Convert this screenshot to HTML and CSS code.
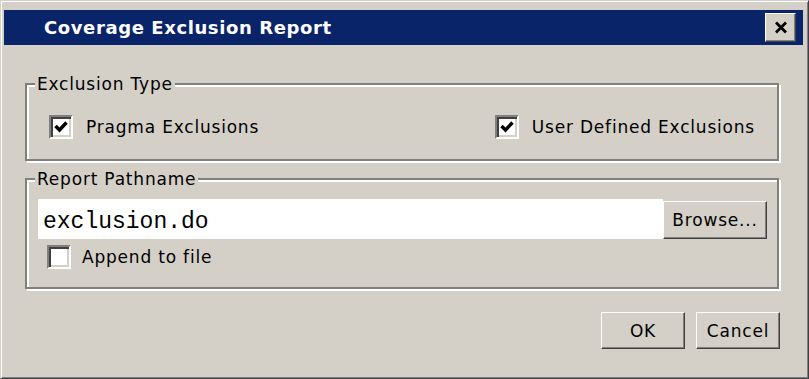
FILE: index.html
```html
<!DOCTYPE html>
<html lang="en">
<head>
  <meta charset="UTF-8" />
  <title>Coverage Exclusion Report</title>
  <link rel="stylesheet" href="styles.css">
</head>
<body>
  <div class="window">
    <div class="titlebar">
      <span class="title">Coverage Exclusion Report</span>
      <button class="close-btn" type="button" aria-label="Close">
        <svg width="14" height="13" viewBox="0 0 14 13">
          <path d="M2 1.5 L12 11.5 M12 1.5 L2 11.5" stroke="#000" stroke-width="2.8" fill="none"/>
        </svg>
      </button>
    </div>

    <form class="dialog">
      <fieldset class="group">
        <legend>Exclusion Type</legend>
        <div class="type-row">
          <label class="check">
            <span class="box">
              <svg width="16" height="16" viewBox="0 0 16 16">
                <path d="M2.5 7 L6.5 11 L13.5 3.5" stroke="#000" stroke-width="3.4" fill="none"/>
              </svg>
            </span>
            Pragma Exclusions
          </label>
          <label class="check">
            <span class="box">
              <svg width="16" height="16" viewBox="0 0 16 16">
                <path d="M2.5 7 L6.5 11 L13.5 3.5" stroke="#000" stroke-width="3.4" fill="none"/>
              </svg>
            </span>
            User Defined Exclusions
          </label>
        </div>
      </fieldset>

      <fieldset class="group path-group">
        <legend>Report Pathname</legend>
        <div class="path-body">
          <div class="path-row">
            <input class="path-input" type="text" value="exclusion.do" />
            <button class="btn browse-btn" type="button">Browse...</button>
          </div>
          <label class="check append">
            <span class="box"></span>
            Append to file
          </label>
        </div>
      </fieldset>

      <div class="actions">
        <button class="btn action-btn" type="submit">OK</button>
        <button class="btn action-btn" type="button">Cancel</button>
      </div>
    </form>
  </div>
</body>
</html>
```

FILE: styles.css
```css
* {
  margin: 0;
  padding: 0;
  box-sizing: border-box;
}

body {
  background: #d4d0c8;
  font-family: 'DejaVu Sans', sans-serif;
  font-size: 17px;
  letter-spacing: 0.8px;
  color: #000;
}

.window {
  width: 809px;
  height: 379px;
  background: #d4d0c8;
  border: 1px solid;
  border-color: #d4d0c8 #404040 #404040 #d4d0c8;
  box-shadow: inset 1px 1px 0 #fff, inset -1px -1px 0 #808080;
  padding: 1px;
}

.titlebar {
  display: flex;
  align-items: center;
  justify-content: space-between;
  height: 35px;
  margin: 8px 4px 0 2px;
  padding: 0 7px 0 40px;
  background: #0a246a;
}

.title {
  color: #fff;
  font-weight: bold;
  font-size: 18px;
  letter-spacing: 0.6px;
  line-height: 35px;
}

.close-btn {
  width: 31px;
  height: 29px;
  display: flex;
  align-items: center;
  justify-content: center;
  background: #d4d0c8;
  border: 1px solid;
  border-color: #fff #404040 #404040 #fff;
  box-shadow: inset -1px -1px 0 #808080;
}

.dialog {
  display: flex;
  flex-direction: column;
  padding: 0 28px 0 23px;
}

.group {
  border: 2px solid #808080;
  box-shadow: inset 2px 2px 0 #fff, 2px 2px 0 #fff;
  padding: 0;
  margin-top: 29px;
}

.group legend {
  margin-left: 8px;
  padding: 0 2px;
  line-height: 20px;
  background: #d4d0c8;
}

.type-row {
  display: flex;
  justify-content: space-between;
  padding: 21px 22px 20px 22px;
}

.check {
  display: flex;
  align-items: center;
  gap: 13px;
}

.box {
  width: 24px;
  height: 24px;
  display: flex;
  align-items: center;
  justify-content: center;
  background: #fff;
  border: 2px solid;
  border-color: #808080 #fff #fff #808080;
  box-shadow: inset 2px 2px 0 #404040, inset -2px -2px 0 #d4d0c8;
}

.path-group {
  margin-top: 8px;
}

.path-body {
  padding: 10px 10px 18px 11px;
}

.path-row {
  display: flex;
  align-items: flex-end;
}

.path-input {
  flex: 1;
  height: 40px;
  border: none;
  outline: none;
  background: #fff;
  padding: 6px 5px 0 5px;
  font-family: 'Liberation Mono', monospace;
  font-size: 23px;
  letter-spacing: 0;
  color: #000;
}

.btn {
  background: #d4d0c8;
  font-family: 'DejaVu Sans', sans-serif;
  font-size: 17px;
  letter-spacing: 0.8px;
  color: #000;
  border: 1px solid;
  border-color: #fff #404040 #404040 #fff;
  box-shadow: inset -1px -1px 0 #808080;
}

.browse-btn {
  width: 104px;
  height: 38px;
}

.append {
  margin-top: 6px;
  margin-left: 9px;
  gap: 11px;
}

.actions {
  display: flex;
  justify-content: flex-end;
  gap: 11px;
  margin-top: 23px;
  margin-right: -1px;
}

.action-btn {
  width: 84px;
  height: 37px;
}
```
